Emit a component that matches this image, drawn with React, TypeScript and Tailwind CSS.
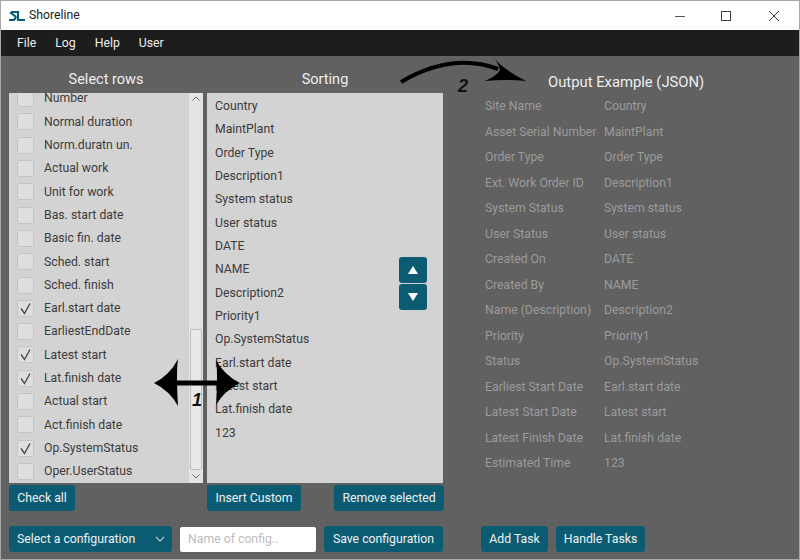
import React from 'react';

const rows = [
  { label: 'Number', checked: false },
  { label: 'Normal duration', checked: false },
  { label: 'Norm.duratn un.', checked: false },
  { label: 'Actual work', checked: false },
  { label: 'Unit for work', checked: false },
  { label: 'Bas. start date', checked: false },
  { label: 'Basic fin. date', checked: false },
  { label: 'Sched. start', checked: false },
  { label: 'Sched. finish', checked: false },
  { label: 'Earl.start date', checked: true },
  { label: 'EarliestEndDate', checked: false },
  { label: 'Latest start', checked: true },
  { label: 'Lat.finish date', checked: true },
  { label: 'Actual start', checked: false },
  { label: 'Act.finish date', checked: false },
  { label: 'Op.SystemStatus', checked: true },
  { label: 'Oper.UserStatus', checked: false },
];

const sorting = [
  'Country', 'MaintPlant', 'Order Type', 'Description1', 'System status', 'User status', 'DATE', 'NAME',
  'Description2', 'Priority1', 'Op.SystemStatus', 'Earl.start date', 'Latest start', 'Lat.finish date', '123',
];

const output = [
  ['Site Name', 'Country'],
  ['Asset Serial Number', 'MaintPlant'],
  ['Order Type', 'Order Type'],
  ['Ext. Work Order ID', 'Description1'],
  ['System Status', 'System status'],
  ['User Status', 'User status'],
  ['Created On', 'DATE'],
  ['Created By', 'NAME'],
  ['Name (Description)', 'Description2'],
  ['Priority', 'Priority1'],
  ['Status', 'Op.SystemStatus'],
  ['Earliest Start Date', 'Earl.start date'],
  ['Latest Start Date', 'Latest start'],
  ['Latest Finish Date', 'Lat.finish date'],
  ['Estimated Time', '123'],
];

const Btn = ({ children, className = '' }: { children: React.ReactNode; className?: string }) => (
  <button className={`h-[26px] whitespace-nowrap rounded-[3px] bg-[#0b5c73] text-[12.25px] text-[#f0f0f0] ${className}`}>{children}</button>
);

const Check = ({ checked }: { checked: boolean }) => (
  <span className="flex h-[17px] w-[17px] shrink-0 items-center justify-center rounded-[2px] border border-[#c4c4c4] bg-[#dedede]">
    {checked && (
      <svg width="15" height="15" viewBox="0 0 15 15" fill="none">
        <path d="M3 7.5 L6.5 12.5 L12 2.5" stroke="#4a4a4a" strokeWidth="1.4" />
      </svg>
    )}
  </span>
);

export default function App() {
  return (
    <div className="relative flex h-[560px] w-[800px] flex-col overflow-hidden border border-[#a8a8a8] font-['Roboto',sans-serif] text-[12.25px]">
      {/* Title bar */}
      <div className="flex h-[29px] shrink-0 items-center bg-white pl-[8px]">
        <svg width="16" height="12" viewBox="0 0 16 12" fill="none" stroke="#0b5c73" strokeWidth="2.2">
          <path d="M8 2 H3 L2 3 L6.5 6.5 L6.5 8 L5 10 H0" />
          <path d="M9 1 V10 H16" />
        </svg>
        <span className="ml-[4px] text-[12.25px] text-[#222]">Shoreline</span>
        <div className="ml-auto flex items-center text-[#333]">
          <span className="flex w-[46px] justify-center">
            <svg width="12" height="12" viewBox="0 0 12 12"><path d="M1 6.5 H11" stroke="#555" /></svg>
          </span>
          <span className="flex w-[46px] justify-center">
            <svg width="12" height="12" viewBox="0 0 12 12" fill="none"><rect x="1.5" y="1.5" width="9" height="9" stroke="#444" /></svg>
          </span>
          <span className="flex w-[50px] justify-center">
            <svg width="12" height="12" viewBox="0 0 12 12" fill="none"><path d="M1 1 L11 11 M11 1 L1 11" stroke="#333" /></svg>
          </span>
        </div>
      </div>

      {/* Menu bar */}
      <div className="flex h-[26px] shrink-0 items-center gap-[19px] bg-[#1d1d1d] pl-[16px] text-[#eeeeee]">
        <span>File</span>
        <span>Log</span>
        <span>Help</span>
        <span>User</span>
      </div>

      {/* Body */}
      <div className="flex min-h-0 flex-1 bg-[#616161] pl-[8px]">
        <div className="flex w-[435px] shrink-0 flex-col">
          <div className="flex h-[37px] shrink-0 items-end pb-[2px] text-[14.5px] text-[#eeeeee]">
            <span className="w-[194px] text-center">Select rows</span>
            <span className="ml-[4px] w-[236px] text-center">Sorting</span>
          </div>

          <div className="flex h-[390px] shrink-0 gap-[4px]">
            {/* Select rows list */}
            <div className="flex w-[194px] overflow-hidden bg-[#d3d3d3]">
              <div className="-mt-[6px] flex-1 pl-[8px] text-[#3c3c3c]">
                {rows.map(r => (
                  <div key={r.label} className="flex h-[23.3px] items-center gap-[10px]">
                    <Check checked={r.checked} />
                    <span>{r.label}</span>
                  </div>
                ))}
              </div>
              <div className="relative flex w-[14px] shrink-0 flex-col items-center bg-[#e4e4e4]">
                <svg className="mt-[1px]" width="10" height="10" viewBox="0 0 10 10" fill="none"><path d="M1.5 6.5 L5 3 L8.5 6.5" stroke="#666" /></svg>
                <div className="mt-[225px] h-[141px] w-[12px] rounded-[2px] border border-[#bdbdbd] bg-[#e9e9e9]" />
                <svg className="mt-[1px]" width="10" height="10" viewBox="0 0 10 10" fill="none"><path d="M1.5 3.5 L5 7 L8.5 3.5" stroke="#666" /></svg>
              </div>
            </div>

            {/* Sorting list */}
            <div className="relative w-[236px] bg-[#d3d3d3] pl-[8px] pt-[1.4px] text-[#3c3c3c]">
              {sorting.map(s => (
                <div key={s} className="flex h-[23.35px] items-center">{s}</div>
              ))}
              <div className="absolute left-[192px] top-[164px] flex flex-col gap-[1px]">
                <button className="flex h-[26px] w-[28px] items-center justify-center rounded-[3px] bg-[#0b5c73]">
                  <svg width="10" height="8" viewBox="0 0 10 8"><path d="M5 0 L10 8 H0 Z" fill="#fff" /></svg>
                </button>
                <button className="flex h-[26px] w-[28px] items-center justify-center rounded-[3px] bg-[#0b5c73]">
                  <svg width="10" height="8" viewBox="0 0 10 8"><path d="M0 0 H10 L5 8 Z" fill="#fff" /></svg>
                </button>
              </div>
            </div>
          </div>

          <div className="mt-[2px] flex shrink-0 items-start">
            <Btn className="w-[66px]">Check all</Btn>
            <Btn className="ml-[132px] w-[94px]">Insert Custom</Btn>
            <Btn className="ml-[33px] w-[110px]">Remove selected</Btn>
          </div>

          <div className="mt-[15px] flex shrink-0 items-center">
            <div className="flex h-[26px] w-[163px] items-center justify-between rounded-[3px] bg-[#0b5c73] pl-[8px] pr-[7px] text-[#f0f0f0]">
              <span>Select a configuration</span>
              <svg width="10" height="6" viewBox="0 0 10 6" fill="none"><path d="M1 1 L5 5 L9 1" stroke="#a9bcc2" strokeWidth="1.3" /></svg>
            </div>
            <div className="ml-[8px] flex h-[25px] w-[136px] items-center rounded-[2px] bg-white pl-[8px] text-[#bdbdbd]">Name of config..</div>
            <Btn className="ml-[8px] w-[119px]">Save configuration</Btn>
          </div>
        </div>

        {/* Output example */}
        <div className="flex min-w-0 flex-1 flex-col pl-[41px]">
          <div className="h-[37.5px] shrink-0 pl-[63px] pt-[15px] text-[14.8px] text-[#eeeeee]">Output Example (JSON)</div>
          <div className="text-[#9b9b9b]">
            {output.map(([a, b]) => (
              <div key={a} className="flex h-[25.5px] items-center">
                <span className="w-[119px] shrink-0 whitespace-nowrap">{a}</span>
                <span>{b}</span>
              </div>
            ))}
          </div>
          <div className="mb-[7px] -ml-[4px] mt-auto flex gap-[8px]">
            <Btn className="w-[67px]">Add Task</Btn>
            <Btn className="w-[89px]">Handle Tasks</Btn>
          </div>
        </div>
      </div>

      {/* Annotation arrows drawn over the window */}
      <svg className="absolute left-[-1px] top-[-1px]" width="800" height="560" fill="none">
        <path d="M401 82 Q452 52 498 69" stroke="#000" strokeWidth="4" />
        <path d="M491 54 Q500 68 526 81 Q506 79 485 81 Q497 76 500 70 Q498 62 491 54 Z" fill="#000" />
        <path d="M170 383 H224" stroke="#000" strokeWidth="5" />
        <path d="M154 383 Q170 375 178 359 Q176 372 178 406 Q170 391 154 383 Z" fill="#000" />
        <path d="M240 383 Q224 375 216 360 Q218 372 216 405 Q224 391 240 383 Z" fill="#000" />
        <text x="192" y="406" fontFamily="Liberation Sans" fontSize="18" fontWeight="700" fontStyle="italic" fill="#111">1</text>
        <text x="458" y="92" fontFamily="Liberation Sans" fontSize="18" fontWeight="700" fontStyle="italic" fill="#111">2</text>
      </svg>
    </div>
  );
}
